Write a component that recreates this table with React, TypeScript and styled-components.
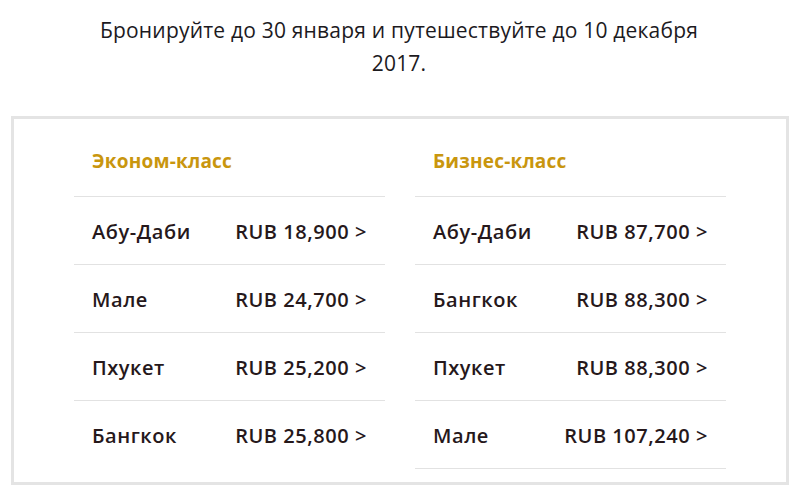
import React from 'react';
import styled, { createGlobalStyle } from 'styled-components';

const GlobalStyle = createGlobalStyle`
  body {
    margin: 0;
    background: #ffffff;
    font-family: "Open Sans", "Noto Sans", sans-serif;
    color: #231a1c;
  }
`;

const Page = styled.div`
  width: 798px;
  padding-top: 14px;
  box-sizing: border-box;
`;

const Headline = styled.p`
  margin: 0 auto;
  width: 640px;
  text-align: center;
  font-size: 21px;
  letter-spacing: 0.2px;
  line-height: 33px;
  color: #1c1a1e;
`;

const Box = styled.div`
  margin: 36px 9px 0 11px;
  border: 3px solid #e4e4e4;
  padding: 0 60px 13px 60px;
  display: grid;
  grid-template-columns: 311px 311px;
  column-gap: 30px;
`;

const Column = styled.div`
  display: flex;
  flex-direction: column;
`;

const ClassTitle = styled.div`
  height: 78px;
  box-sizing: border-box;
  padding: 7px 18px 0;
  display: flex;
  align-items: center;
  font-size: 19px;
  letter-spacing: 0.2px;
  font-weight: 700;
  color: #c9960e;
  border-bottom: 1px solid #e2e2e2;
`;

const Row = styled.a<{ $last?: boolean; $ruled?: boolean }>`
  height: 68px;
  box-sizing: border-box;
  padding: 1px 18px 0;
  display: flex;
  align-items: center;
  justify-content: space-between;
  font-size: 20px;
  letter-spacing: 0.55px;
  font-weight: 600;
  color: #26181b;
  text-decoration: none;
  border-bottom: 1px solid ${(p) => (p.$last && !p.$ruled ? 'transparent' : '#e2e2e2')};
`;

type Fare = { city: string; price: string };

const economy: Fare[] = [
  { city: 'Абу-Даби', price: 'RUB 18,900 >' },
  { city: 'Мале', price: 'RUB 24,700 >' },
  { city: 'Пхукет', price: 'RUB 25,200 >' },
  { city: 'Бангкок', price: 'RUB 25,800 >' },
];

const business: Fare[] = [
  { city: 'Абу-Даби', price: 'RUB 87,700 >' },
  { city: 'Бангкок', price: 'RUB 88,300 >' },
  { city: 'Пхукет', price: 'RUB 88,300 >' },
  { city: 'Мале', price: 'RUB 107,240 >' },
];

const FareColumn = ({ title, fares, ruled }: { title: string; fares: Fare[]; ruled?: boolean }) => (
  <Column>
    <ClassTitle>{title}</ClassTitle>
    {fares.map((f, i) => (
      <Row key={f.city} href="#" $last={i === fares.length - 1} $ruled={ruled}>
        <span>{f.city}</span>
        <span>{f.price}</span>
      </Row>
    ))}
  </Column>
);

export default function App() {
  return (
    <>
      <GlobalStyle />
      <Page>
        <Headline>Бронируйте до 30 января и путешествуйте до 10 декабря 2017.</Headline>
        <Box>
          <FareColumn title="Эконом-класс" fares={economy} />
          <FareColumn title="Бизнес-класс" fares={business} ruled />
        </Box>
      </Page>
    </>
  );
}
